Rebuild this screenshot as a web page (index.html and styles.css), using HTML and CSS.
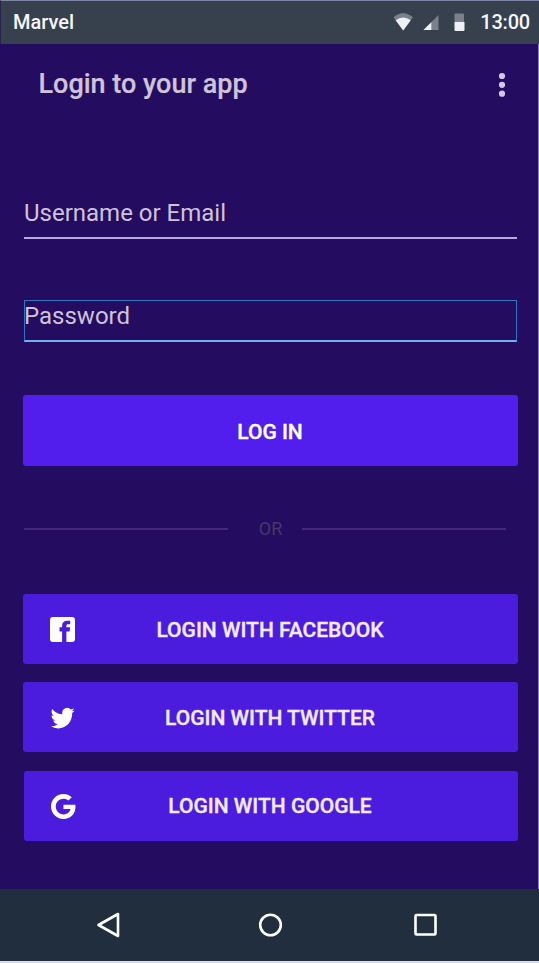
FILE: index.html
```html
<!DOCTYPE html>
<html lang="en">
<head>
<meta charset="utf-8">
<title>Login to your app</title>
<link rel="stylesheet" href="styles.css">
</head>
<body>
<div class="screen">
  <div class="status">
    <span class="carrier">Marvel</span>
    <svg class="indicators" width="76" height="20" viewBox="0 0 76 20">
      <path class="dim" d="M0.500 4.200Q10.200-3.600 19.900 4.200L10.200 17.500Z"/>
      <path class="lit" d="M2.700 7.200Q10.200 2 17.700 7.200L10.200 17.500Z"/>
      <path class="dim" d="M45.500 2V17H30.500Z"/>
      <path class="lit" d="M38.300 9.200V17H30.500Z"/>
      <path class="dim" d="M63.500 0.500h6.500a1 1 0 0 1 1 1V9H61.500V1.500a1 1 0 0 1 1-1z"/>
      <path class="lit" d="M61.500 9h10v8a1 1 0 0 1-1 1h-8a1 1 0 0 1-1-1z"/>
    </svg>
    <span class="clock">13:00</span>
  </div>
  <main class="app">
    <header class="appbar">
      <h1 class="title">Login to your app</h1>
      <svg class="more" width="8" height="26" viewBox="0 0 8 26"><circle cx="4" cy="4" r="3.1"/><circle cx="4" cy="12.800" r="3.1"/><circle cx="4" cy="21.700" r="3.1"/></svg>
    </header>
    <div class="field username">Username or Email</div>
    <div class="field password">Password</div>
    <div class="button primary"><span class="label">LOG IN</span></div>
    <div class="divider"><span class="rule"></span><span class="or">OR</span><span class="rule"></span></div>
    <div class="socials">
      <div class="button">
        <svg class="icon" width="26" height="26" viewBox="0 0 26 26"><path d="M3 0h19a3 3 0 0 1 3 3v19a3 3 0 0 1-3 3h-5.600V14.500h3.200l.6-4.200h-3.800V9c0-1.200.5-1.700 1.700-1.700h2.100V3.700h-2.700c-3.500 0-5.400 1.800-5.400 5v1.600H9.500v4.200h2.600V25H3a3 3 0 0 1-3-3V3a3 3 0 0 1 3-3z"/></svg>
        <span class="label facebook">LOGIN WITH FACEBOOK</span>
      </div>
      <div class="button">
        <svg class="icon" width="26" height="26" viewBox="0 0 26 26"><path transform="translate(.6 .6) scale(1 1.050)" d="M23.950 4.570a10 10 0 0 1-2.820.78 4.960 4.960 0 0 0 2.160-2.720c-.95.550-2 .950-3.130 1.180a4.920 4.920 0 0 0-8.380 4.480C7.690 8.090 4.070 6.130 1.640 3.160a4.820 4.820 0 0 0-.67 2.480c0 1.710.87 3.210 2.190 4.100a4.900 4.900 0 0 1-2.230-.62v.06a4.920 4.920 0 0 0 3.950 4.830 4.990 4.990 0 0 1-2.210.09 4.940 4.940 0 0 0 4.600 3.420A9.870 9.870 0 0 1 0 19.540a13.990 13.990 0 0 0 7.550 2.210c9.050 0 14-7.500 14-13.980 0-.21 0-.42-.02-.63a9.940 9.940 0 0 0 2.460-2.550z"/></svg>
        <span class="label twitter">LOGIN WITH TWITTER</span>
      </div>
      <div class="button google-button">
        <svg class="icon" width="26" height="26" viewBox="0 0 26 26"><path transform="translate(1 -.3) scale(.0502)" d="M488 261.800C488 403.300 391.100 504 248 504 110.800 504 0 393.200 0 256S110.800 8 248 8c66.800 0 123 24.500 166.300 64.900l-67.500 64.900C258.500 52.600 94.300 116.600 94.300 256c0 86.500 69.100 156.600 153.700 156.600 98.200 0 135-70.400 140.800-106.900H248v-85.300h236.100c2.300 12.700 3.900 24.900 3.900 41.400z"/></svg>
        <span class="label google">LOGIN WITH GOOGLE</span>
      </div>
    </div>
  </main>
  <nav class="nav">
    <svg width="25" height="28" viewBox="0 0 25 28"><path d="M22 3v22L2.500 14Z"/></svg>
    <svg width="26" height="26" viewBox="0 0 26 26"><circle cx="13.500" cy="13" r="10.300"/></svg>
    <svg width="26" height="26" viewBox="0 0 26 26"><rect x="3.500" y="3" width="20" height="19.500" rx="1"/></svg>
  </nav>
</div>
</body>
</html>
```
FILE: styles.css
```css
* { box-sizing: border-box; }
body { margin: 0; font-family: Roboto, "Liberation Sans", sans-serif; background: #240c60; }
svg { display: block; flex: none; }
.screen { width: 539px; height: 963px; display: flex; flex-direction: column; border-bottom: 2px solid #d9dbe8; }
.status { height: 44px; flex: none; display: flex; align-items: center; padding: 1px 9px 0 12px; background: #37404d; border-top: 1px solid #7d84a6; border-left: 1px solid #292150; color: #f4f6fa; font-size: 20px; }
.carrier { font-weight: 500; margin-top: -2px; flex: 1; }
.indicators { margin: 0 11px 0 0; }
.dim { fill: #7b818a; }
.lit { fill: #eef0f3; }
.clock { font-size: 20px; font-weight: 500; letter-spacing: -0.2px; margin-top: -2px; }
.app { flex: 1; padding: 0 21px 0 23px; border-right: 1px solid #8e83b1; background: #240c60; }
.appbar { height: 80px; display: flex; justify-content: space-between; align-items: center; padding: 0 11px 0 15.5px; }
.title { margin: 0; font-size: 27px; font-weight: 500; line-height: 32px; color: #cec3d7; -webkit-text-stroke: 0.2px; }
.more { fill: #d3c6e8; margin-top: 2px; }
.field { color: #cec3d7; font-size: 24px; line-height: 30px; width: 493px; margin-left: 1px; }
.username { margin-top: 74px; height: 41px; border-bottom: 2px solid #b8a9dc; }
.password { margin-top: 61px; height: 42px; border: 1px solid #2f75c0; border-bottom: 2px solid #70b1ec; text-indent: -1px; }
.button { position: relative; display: flex; align-items: center; justify-content: center; width: 495px; height: 70px; border-radius: 3px; background: #4b1cdd; color: #f3eaff; font-size: 21px; font-weight: 500; }
.label { padding: 2px 1px 0 0; -webkit-text-stroke: 0.35px; }
.primary { margin-top: 53px; height: 71px; background: #521eed; color: #fff; }
.divider { height: 30px; margin: 48px 11px 0 1px; display: flex; align-items: center; justify-content: space-between; }
.rule { width: 204px; height: 2px; background: #47297b; }
.or { color: #443968; font-size: 18px; margin: -2px 0 0 11px; }
.socials { margin-top: 50px; display: flex; flex-direction: column; gap: 18px; }
.google-button { width: 494px; margin: 1px 0 0 1px; }
.google { padding-top: 0; padding-right: 2px; }
.icon { position: absolute; left: 27px; top: 23px; fill: #fff; }
.google-button .icon { left: 26px; }
.nav { flex: none; height: 72px; display: grid; grid-template-columns: 161px 155px 26px; justify-content: start; align-items: center; padding-left: 96px; background: #202e3d; }
.nav svg { fill: none; stroke: #fff; stroke-width: 2.6; stroke-linejoin: round; }
```
